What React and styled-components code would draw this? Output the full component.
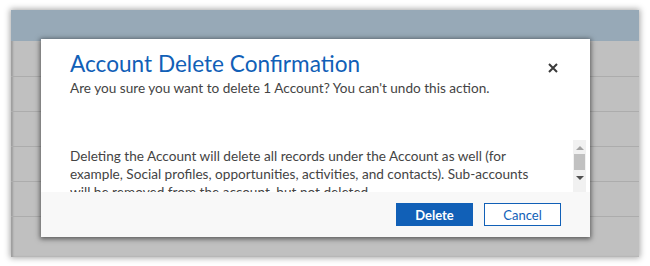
import styled, { createGlobalStyle } from "styled-components"

const Global = createGlobalStyle`
  html, body { margin: 0; padding: 0; background: #fff; }
  body { width: 650px; height: 266px; overflow: hidden; font-family: "Segoe UI", Lato, "Open Sans", sans-serif; }
`;

const Frame = styled.div`
  position: relative;
  margin: 10px 0 0 11px;
  width: 628px;
  height: 247px;
  background: #c0c0c0;
  box-shadow: 0 0 6px 1px rgba(0, 0, 0, 0.35), inset 2px 0 2px rgba(0, 0, 0, 0.18);
  overflow: hidden;
`;

const HeaderBand = styled.div`
  height: 31px;
  background: #97a9b7;
`;

const Row = styled.div`
  height: ${(p) => p.h || 35}px;
  border-bottom: 1px solid #acacac;
  box-sizing: border-box;
`;

const Dialog = styled.div`
  position: absolute;
  left: 30px;
  top: 29px;
  width: 549px;
  height: 198px;
  background: #fff;
  box-shadow: 0 1px 5px 1px rgba(0, 0, 0, 0.55);
  display: flex;
  flex-direction: column;
`;

const Head = styled.div`
  display: flex;
  justify-content: space-between;
  align-items: flex-start;
  padding: 10px 30px 0 29px;
`;

const Title = styled.h2`
  margin: 0;
  font-size: 22.6px;
  font-weight: 400;
  color: #1160b7;
  line-height: 30px;
`;

const Subtitle = styled.p`
  margin: 0;
  font-size: 13.6px;
  color: #444;
  line-height: 18px;
`;

const Close = styled.button`
  border: 0;
  background: none;
  padding: 0;
  margin-top: 14px;
  width: 12px;
  height: 12px;
  display: flex;
  svg { display: block; }
`;

const Body = styled.div`
  margin-top: 43px;
  display: flex;
  height: 52px;
  padding-left: 29px;
  padding-right: 4px;
`;

const BodyText = styled.div`
  flex: 1;
  overflow: hidden;
  padding-top: 7px;
  padding-right: 38px;
  font-size: 13.6px;
  line-height: 18px;
  color: #444;
`;

const Scrollbar = styled.div`
  width: 13px;
  background: #f1f1f1;
  display: flex;
  flex-direction: column;
  align-items: center;
  padding-top: 6px;
  box-sizing: border-box;
`;

const Arrow = styled.div`
  width: 0;
  height: 0;
  border-left: 4px solid transparent;
  border-right: 4px solid transparent;
  ${(p) => (p.up ? "border-bottom: 4px solid #a3a3a3;" : "border-top: 4px solid #505050;")}
`;

const Thumb = styled.div`
  width: 11px;
  height: 16px;
  background: #c1c1c1;
  margin: 4px 0 6px;
`;

const Footer = styled.div`
  flex: 1;
  background: #f8f8f8;
  display: flex;
  justify-content: flex-end;
  align-items: center;
  gap: 11px;
  padding-right: 29px;
`;

const Button = styled.button`
  width: 77px;
  height: 23px;
  font-family: inherit;
  font-size: 13px;
  font-weight: ${(p) => (p.primary ? 700 : 400)};
  color: ${(p) => (p.primary ? "#fff" : "#1160b7")};
  background: ${(p) => (p.primary ? "#1160b7" : "#fff")};
  border: 1px solid #1160b7;
  padding: 0;
`;

const App = () => {
  return (
    <>
      <Global />
      <Frame>
        <HeaderBand />
        <Row h={36} />
        <Row />
        <Row />
        <Row />
        <Row />
        <Dialog>
          <Head>
            <div>
              <Title>Account Delete Confirmation</Title>
              <Subtitle>Are you sure you want to delete 1 Account? You can't undo this action.</Subtitle>
            </div>
            <Close aria-label="Close">
              <svg width="10" height="10" viewBox="0 0 10 10">
                <path d="M1 1L9 9M9 1L1 9" stroke="#3a3a3a" strokeWidth="2" />
              </svg>
            </Close>
          </Head>
          <Body>
            <BodyText>
              Deleting the Account will delete all records under the Account as well (for example, Social
              profiles, opportunities, activities, and contacts). Sub-accounts will be removed from the
              account, but not deleted.
            </BodyText>
            <Scrollbar>
              <Arrow up />
              <Thumb />
              <Arrow />
            </Scrollbar>
          </Body>
          <Footer>
            <Button primary>Delete</Button>
            <Button>Cancel</Button>
          </Footer>
        </Dialog>
      </Frame>
    </>
  )
}

export default App
